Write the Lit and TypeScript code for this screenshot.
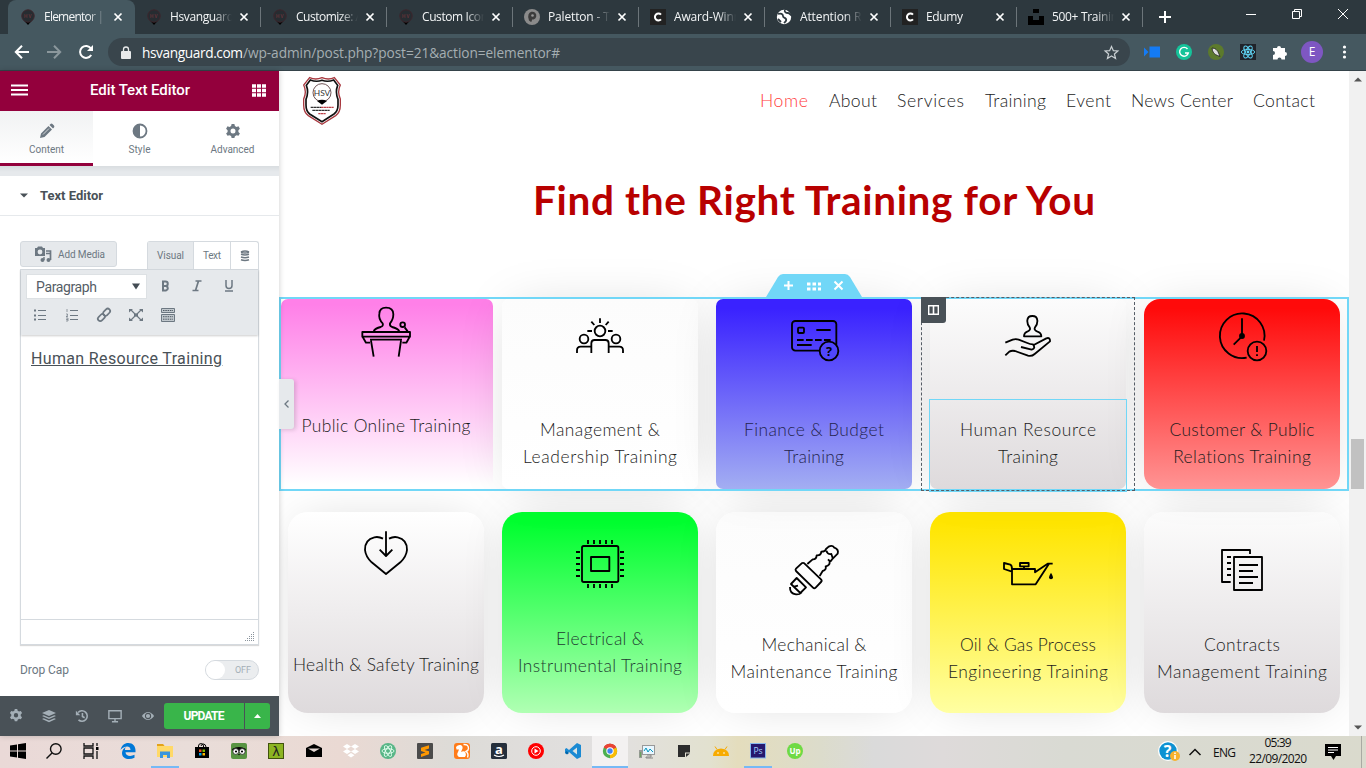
import { LitElement, html, css, svg, nothing } from 'lit';
import { customElement, property } from 'lit/decorators.js';

/** A single line of text whose tracking is adjusted to a given line width. */
@customElement('fit-text')
class FitText extends LitElement {
  @property({ type: Number }) w = 0;
  static styles = css`
    :host { display: inline-block; white-space: nowrap; }
    span { display: inline-block; }
  `;
  render() {
    return html`<span><slot></slot></span>`;
  }
  firstUpdated() {
    const n = (this.textContent || '').length;
    const natural = this.getBoundingClientRect().width;
    if (!this.w || n < 2) return;
    const ls = (this.w - natural) / (n - 1);
    this.style.letterSpacing = ls + 'px';
    this.style.marginRight = -ls + 'px';
  }
}

const pin = svg`<path d="M4 11.500h8L8 16z" fill="#000"/><circle cx="8" cy="7" r="6.200" fill="#262c31" stroke="#3d252c" stroke-width="1"/><path d="M4.800 5v4M7 5v4M4.800 7H7M9 5l1.200 4L11.400 5" stroke="#5e3238" fill="none" stroke-width=".8"/>`;
const cIcon = svg`<rect width="16" height="16" fill="#222"/><path d="M11 5.600A3.500 3.500 0 1 0 11 10.400" fill="none" stroke="#fff" stroke-width="2"/>`;

const tabs: [any, string, number][] = [
  [pin, 'Elementor |', 60],
  [pin, 'Hsvanguard', 64],
  [pin, 'Customize: A', 67],
  [pin, 'Custom Icon', 66],
  [svg`<circle cx="8" cy="8" r="8" fill="#8b8b8b"/><path d="M5 11.500Q3.500 8 4.500 5.500a4 4 0 1 1 5 5L8 10.500q0 2-1 2.500z" fill="#3c3c3c"/><circle cx="8.500" cy="6.500" r="1.300" fill="#999"/>`, 'Paletton - Th', 69],
  [cIcon, 'Award-Winn', 67],
  [svg`<circle cx="8" cy="8" r="7.200" fill="#fff"/><path d="M2 5c3-1 5 0 5 2s2 1 3 3-1 3-2 4M9 1c-1 2 1 3 3 3s2 2 3 2M2 10l3 3" stroke="#2d383e" stroke-width="1.800" fill="none"/>`, 'Attention Re', 68],
  [cIcon, 'Edumy', 37],
  [svg`<path d="M5 0h6v4H5zM0 7h5v4h6V7h5v9H0z" fill="#000"/>`, '500+ Trainin', 66],
];

interface Card {
  top: number; iconY: number; textY: number; tone: string; box: string; icon: any; lines: [string, number][];
}

const row1: Card[] = [
  { top: 299, iconY: 332, textY: 426, tone: 'pink', box: '228 126 180 180',
    icon: svg`<path d="M281 213q5-8 21-12q9-3 6-11q-13-13-10-29q1-18 20-18q22 0 22 20q0 16-10 27q-2 8 6 11q16 4 22 12M247 216h143v14H247zM247 229l11 19h12M390 229l-11 19h-12M270 239h96M273 242l8 48M363 242l-7 48M374 202l9 12"/><circle cx="368" cy="194" r="7"/>`,
    lines: [['Public Online Training', 169]] },
  { top: 299, iconY: 336, textY: 430, tone: 'snow', box: '870 138 180 180',
    icon: svg`<circle cx="960" cy="213" r="16"/><circle cx="912" cy="237" r="13"/><circle cx="1008" cy="237" r="13"/><path d="M934 279v-29q0-10 10-10h32q10 0 10 10v29M891 279v-8q0-11 11-11h30M1029 279v-8q0-11-11-11h-30M960 175v14M934 185l9 10M986 185l-9 10M922 213h14M984 213h14"/>`,
    lines: [['Management &', 120], ['Leadership Training', 154]] },
  { top: 299, iconY: 340, textY: 430, tone: 'blue', box: '252 150 180 180',
    icon: svg`<rect x="276" y="183" width="133" height="89" rx="10"/><rect x="294" y="203" width="18" height="16" rx="3"/><path d="M349 210h43M291 255h44"/><path d="M291 240h102" stroke-dasharray="20 7"/><circle cx="387" cy="273" r="28" fill="#5046fd"/><text x="387" y="287" class="q">?</text>`,
    lines: [['Finance & Budget', 140], ['Training', 60]] },
  { top: 299, iconY: 336, textY: 430, tone: 'fog', box: '894 138 180 180',
    icon: svg`<path d="M972 229h52q0-11-13-15q-10-4-6-12q8-9 7-21q-1-13-15-13t-15 13q-1 12 7 21q4 8-6 12q-11 4-11 15zM916 248l22-9q9-3 18 0l26 10q8 4 17 4q9 12-4 16l-32-8M1001 255l38-20q12-4 11 9l-46 38q-9 8-20 5l-39-14q-10-2-17 2l-12 11"/>`,
    lines: [['Human Resource', 136], ['Training', 60]] },
  { top: 299, iconY: 338, textY: 430, tone: 'red', box: '246 144 180 180',
    icon: svg`<path d="M402 242A67 67 0 1 0 350 293M336 175v50M333 232l-22 22M381 258v18M381 283v5"/><circle cx="336" cy="228" r="6" fill="#000"/><circle cx="381" cy="273" r="28"/>`,
    lines: [['Customer & Public', 145], ['Relations Training', 138]] },
];

const row2: Card[] = [
  { top: 512, iconY: 553, textY: 665, tone: 'mist', box: '228 99 180 180',
    icon: svg`<path d="M318 124v74M299 179l19 19l19-19M309 146Q296 139 283 142Q254 149 255 180Q257 200 275 217L318 252L361 217Q379 200 381 180Q382 149 353 142Q340 139 327 146"/>`,
    lines: [['Health & Safety Training', 186]] },
  { top: 512, iconY: 564, textY: 639, tone: 'green', box: '870 132 180 180',
    icon: svg`<rect x="906" y="168" width="109" height="108" rx="5"/><rect x="933" y="201" width="55" height="42"/><path d="M924 150v12M942 150v12M960 150v12M978 150v12M996 150v12M924 282v12M942 282v12M960 282v12M978 282v12M996 282v12M888 186h12M888 204h12M888 222h12M888 240h12M888 258h12M1020 186h12M1020 204h12M1020 222h12M1020 240h12M1020 258h12"/>`,
    lines: [['Electrical &', 88], ['Instrumental Training', 164]] },
  { top: 512, iconY: 570, textY: 645, tone: 'snow', box: '252 150 180 180',
    icon: svg`<path d="M288 236l17-16q4-3 8 0l50 48q4 4 0 8l-16 17q-4 4-8 0l-51-50q-3-4 0-7zM322 222l16-14q11 1 12-12q13 1 14-11q12 0 14-8l8-7q11-6 17 3q14 5 10 18l-17 17q-2 5-7 7q1 12-12 14q3 11-9 14l-9 15M379 182q4 12 15 10l4 12M384 208l8 8M290 264l-17 18l28 27l17-17zM270 291q-1 20 18 22q10 1 17-6M282 290l12-3"/>`,
    lines: [['Mechanical &', 105], ['Maintenance Training', 167]] },
  { top: 512, iconY: 573, textY: 645, tone: 'yellow', box: '894 159 180 180',
    icon: svg`<path d="M1058 221h-15l-38 26v-10h-69v46h71l40-62M960 219h26v10h-26zM972 229v8M936 245l-24-8v-18l19 5q5 2 5 14"/><path d="M1053 248q6 9 6 14a6 6 0 0 1-12 0q0-5 6-14z" fill="#000" stroke="none"/>`,
    lines: [['Oil & Gas Process', 136], ['Engineering Training', 160]] },
  { top: 512, iconY: 570, textY: 645, tone: 'fog', box: '306 150 180 180',
    icon: svg`<path d="M362 276h-26v-96h84v12M372 201h84v99h-84zM387 225h57M387 243h42M387 261h57M387 279h42M351 201h12M351 219h12M351 237h12M351 255h12"/>`,
    lines: [['Contracts', 76], ['Management Training', 170]] },
];

const nav: [string, number, number][] = [
  ['Home', 48, 21], ['About', 48, 20], ['Services', 67, 21], ['Training', 61, 20],
  ['Event', 45, 20], ['News Center', 102, 20], ['Contact', 62, 0],
];

const gear = svg`<path fill="currentColor" fill-rule="evenodd" d="M6.600 0h2.800l.5 2 1.600.9 2-.6 1.400 2.400-1.500 1.500v1.800l1.500 1.400-1.400 2.400-2-.6-1.600 1-.5 1.900H6.600l-.5-2-1.600-.9-2 .6-1.400-2.400L2.600 8V6.200L1.100 4.700l1.400-2.400 2 .6L6.100 2zM8 4.600a2.500 2.500 0 1 0 0 5 2.500 2.500 0 0 0 0-5z"/>`;

const apps: [any, string][] = [
  [svg`<path d="M0 2.500l7-1v6H0zM8 1.300L16 0v7.500H8zM0 8.500h7v6l-7-1zM8 8.500h8V16l-8-1.300z"/>`, 'start'],
  [svg`<circle cx="9.800" cy="6" r="5.300" fill="none" stroke="#111" stroke-width="1.400"/><path d="M6 10L.5 15.500" stroke="#111" stroke-width="1.500"/>`, ''],
  [svg`<path d="M1 0v3h9V0M1 16v-3h9v3M1 5h9v6H1zM14 0v3M14 8v8" fill="none" stroke="#111" stroke-width="1.300"/><path d="M13 4h2.500v3H13z"/>`, ''],
  [svg`<path d="M.5 7C1.500 2.500 4.500 0 8.300 0 13 0 15.500 3.500 15.500 7.500V9.300H5.500c.2 4 5.500 4.500 9 2.500v3C9 17.500 2 16 2 10c0-3 2-5 4-6-1 1.200-1 2-1 3h5.500C10.500 3 7 3 4.500 4 2.500 4.800 1 6 .5 7z" fill="#0078d7"/>`, ''],
  [svg`<path d="M0 1h6l1.500 2H16v11H0z" fill="#ffd968"/><path d="M0 1h6l1.500 2H0z" fill="#e3a21a"/><path d="M3 15V8.500h10V15h-3v-3H6v3z" fill="#3a96dd"/>`, 'open'],
  [svg`<path d="M1 4h14v11H1z"/><path d="M4.500 5V3q0-2.400 2.500-2.400T9.500 3v2M7 3q.5-2 2.500-2T12 4" fill="none" stroke="#000"/><path d="M5 6.500h2.500V9H5z" fill="#f25022"/><path d="M8.500 6.500H11V9H8.500z" fill="#7fba00"/><path d="M5 10h2.500v2.500H5z" fill="#00a4ef"/><path d="M8.500 10H11v2.500H8.500z" fill="#ffb900"/>`, ''],
  [svg`<rect width="16" height="16" rx="2" fill="#589442"/><path d="M1 6q7-4 14 0l-1 2H2z"/><circle cx="4.800" cy="8.500" r="2.900" fill="#fff" stroke="#111" stroke-width=".7"/><circle cx="11.200" cy="8.500" r="2.900" fill="#fff" stroke="#111" stroke-width=".7"/><circle cx="5" cy="8.500" r="1.100"/><circle cx="11" cy="8.500" r="1.100"/><path d="M7 11h2l-1 1.500z"/>`, ''],
  [svg`<rect x=".5" y=".5" width="15" height="15" fill="#8cb422" stroke="#40520e"/><text x="8" y="12.500" font-size="13" text-anchor="middle" font-family="DejaVu Sans" fill="#222">λ</text>`, ''],
  [svg`<path d="M0 5l8-4 8 4v9H0z"/><path d="M2 5.500h12L8 9z" fill="#e3d7d4"/>`, 'wide'],
  [svg`<path d="M4 1l4 2.500L4 6 0 3.500zM12 1l4 2.500L12 6 8 3.500zM4 6l4 2.500L4 11 0 8.500zM12 6l4 2.500-4 2.500-4-2.500zM8 10l3.500 2.300L8 14.600l-3.500-2.300z" fill="#fff"/>`, ''],
  [svg`<circle cx="8" cy="8" r="8" fill="#58b687"/><g fill="none" stroke="#e6fff0" stroke-width=".9"><ellipse cx="8" cy="8" rx="6" ry="2.300"/><ellipse cx="8" cy="8" rx="6" ry="2.300" transform="rotate(60 8 8)"/><ellipse cx="8" cy="8" rx="6" ry="2.300" transform="rotate(120 8 8)"/></g>`, ''],
  [svg`<rect width="16" height="16" rx="1" fill="#4b4b4b"/><path d="M4 4.800l8-2.500V5.500L7.500 7 12 8.300v3L4 14v-3l4.500-1.500L4 8z" fill="#ff9800"/>`, ''],
  [svg`<rect width="16" height="16" rx="3" fill="#ff7c1a"/><path d="M2 4q2-2.500 4.500-2 2.500.7 2 3.500L7 9q3-1.500 4.500.5 1 2-.5 4.500H5q-3-2-1-5l1-2.500H2.500z" fill="#fff"/><path d="M9.500 1.500q5-.5 5 4 0 2-2.500 3 3 2 1.500 6" fill="none" stroke="#fff" stroke-width="1.400"/>`, ''],
  [svg`<rect width="16" height="16" rx="1.500" fill="#252f3c"/><text x="8" y="11" font-size="13" font-weight="bold" text-anchor="middle" font-family="Open Sans" fill="#fff">a</text><path d="M3 12q5 3 10 0" stroke="#fff" fill="none" stroke-width="1.200"/>`, ''],
  [svg`<circle cx="8" cy="8" r="8" fill="#f00"/><circle cx="8" cy="8" r="4.300" fill="none" stroke="#fff"/><path d="M6.500 5.500L10.500 8l-4 2.500z" fill="#fff"/>`, ''],
  [svg`<path d="M12 0l4 2v12l-4 2L4 9 1.500 11 0 10V6l1.500-1L4 7z" fill="#1b8ad3"/><path d="M12 4.500V11.500L7.500 8z" fill="#dbe4e5"/><path d="M1.500 8L4 10 2 11.500.2 10z" fill="#0065a9"/>`, ''],
  [svg`<circle cx="8" cy="8" r="7.200" fill="#4caf50"/><path d="M8 8L1.800 4.400A7.200 7.200 0 0 1 14.200 4.400z" fill="#ea4335"/><path d="M8 8l6.200-3.600A7.200 7.200 0 0 1 8 15.200z" fill="#fbbc05"/><path d="M1.800 4.400A7.200 7.200 0 0 1 14.200 4.400H8z" fill="#ea4335"/><circle cx="8" cy="8" r="3.700" fill="#fff"/><circle cx="8" cy="8" r="2.700" fill="#4285f4"/>`, 'current'],
  [svg`<rect x="3.500" y="2.500" width="12" height="9" fill="#e8f7ff" stroke="#999"/><path d="M5 8l2-3 2 4 2-3 3 3" fill="none" stroke="#0795bd"/><path d="M8 12h4v2H7v1h7" stroke="#888" fill="none"/><path d="M0 7h3v8H0z" fill="#999"/><path d="M.8 9h1.400v5H.8z" fill="#6ca35f"/>`, ''],
  [svg`<path d="M2 2h12v7.500H9V14H2z" fill="#2c2c2c"/><path d="M10 10.500h4L10 14z" fill="#2c2c2c"/>`, ''],
  [svg`<path d="M0 13q0-7 8-7.500Q16 6 16 13z" fill="#f7ab00"/><path d="M4 6.500L2 3.500M12 6.500l2-3" stroke="#f7ab00"/><circle cx="5" cy="10" r=".8" fill="#fff"/><circle cx="11" cy="10" r=".8" fill="#fff"/>`, ''],
  [svg`<rect x=".5" y=".5" width="15" height="14.500" fill="#26186e" stroke="#87b8ef"/><text x="8" y="11" font-size="8.500" text-anchor="middle" font-family="Open Sans" fill="#a4d0ff">Ps</text>`, 'open'],
  [svg`<circle cx="8" cy="8" r="8" fill="#6fda44"/><text x="8" y="10.500" font-size="8" font-weight="bold" text-anchor="middle" font-family="Open Sans" fill="#fff">Up</text>`, ''],
];

@customElement('app-root')
class AppRoot extends LitElement {
  static styles = css`
    :host { display: flex; flex-direction: column; width: 1366px; height: 768px; overflow: hidden;
      font-family: 'Open Sans', 'Noto Sans', sans-serif; background: #fff; }
    * { box-sizing: border-box; }
    svg { display: block; flex: none; overflow: visible; }

    .strip { height: 34px; flex: none; display: flex; background: #2d383e; padding-left: 8px; }
    .tab { width: 126px; height: 34px; display: flex; align-items: center; padding-left: 12px; position: relative; color: #f3f5f6; font-size: 12px; }
    .tab.on { background: #455860; border-radius: 8px 8px 0 0; width: 127px; margin-right: -1px; }
    .tab.sep::before { content: ''; position: absolute; left: 0; top: 7px; width: 1px; height: 20px; background: #6c757a; }
    .tab .t { width: 70px; flex: none; margin-left: 8px; line-height: 20px; -webkit-mask-image: linear-gradient(90deg, #000 44px, transparent 62px); }
    .plus { margin: 11px 0 0 16px; }
    .endsep { width: 1px; height: 20px; margin-top: 7px; background: #6c757a; }
    .win { display: flex; margin-left: auto; padding: 8px 17px 0 0; gap: 34px; }

    .bar { height: 37px; flex: none; background: #455860; border-bottom: 1px solid #35434a; display: flex; align-items: center; padding-left: 14px; }
    .bar .nv { margin-right: 16px; }
    .omni { width: 1022px; height: 28px; margin-left: -2px; border-radius: 14px; background: #39454c; display: flex; align-items: center; padding: 0 11px 0 13px; color: #a5aeb2; font-size: 13.700px; }
    .omni b { font-weight: 400; color: #fff; }
    .omni .lk { margin-right: 11px; }
    .omni .st { margin-left: auto; }
    .ext { display: flex; align-items: center; gap: 16px; margin-left: 14px; }
    .ava { width: 22px; height: 22px; margin: 0 -3px; border-radius: 50%; background: #7e57c2; color: #fff; font-size: 12px; line-height: 22px; text-align: center; }

    .main { display: flex; height: 665px; flex: none; }
    .panel { width: 279px; flex: none; background: #fff; display: flex; flex-direction: column; font-family: Roboto, sans-serif; color: #6d7882; position: relative; z-index: 3; box-shadow: 0 0 6px rgba(0,0,0,.2); }
    .phead { height: 40px; flex: none; background: #93003c; display: flex; align-items: center; justify-content: space-between; padding: 0 13px 2px 11px; color: #fff; font-size: 15px; font-weight: 500; }
    .ptabs { height: 55px; flex: none; display: flex; font-size: 10px; position: relative; }
    .ptab { width: 93px; display: flex; flex-direction: column; align-items: center; padding-top: 12px; gap: 4px; line-height: 14px; border-bottom: 3px solid transparent; }
    .ptab.on { background: linear-gradient(#f1f2f3, #fff); border-bottom-color: #93003c; }
    .gap { height: 10px; flex: none; background: linear-gradient(#d9dde0, #e6e9ec 6px); }
    .shead { height: 40px; flex: none; border-bottom: 1px solid #e6e9ec; display: flex; align-items: center; padding-left: 20px; gap: 12px; color: #495157; font-size: 13px; font-weight: 700; }
    .ed { padding: 25px 20px 0; }
    .edtop { display: flex; height: 28px; font-size: 10px; }
    .add { width: 97px; height: 26px; border: 1px solid #d5dadf; border-radius: 3px; background: #e6e9ec; display: flex; align-items: center; padding-left: 13px; gap: 6px; }
    .sw { margin-left: auto; display: flex; border: 1px solid #d5dadf; border-bottom: 0; border-radius: 3px 3px 0 0; line-height: 26px; text-align: center; }
    .sw div { display: flex; align-items: center; justify-content: center; border-left: 1px solid #d5dadf; height: 27px; }
    .sw .v { width: 45px; background: #e6e9ec; border: 0; }
    .sw .tx { width: 37px; }
    .sw .db { width: 28px; }
    .mce { border: 1px solid #d5dadf; height: 376px; display: flex; flex-direction: column; box-shadow: 0 1px 1px rgba(0,0,0,.15); }
    .tools { height: 65px; background: #e6e9ec; padding: 4px 5px 0; box-shadow: 0 1px 2px rgba(0,0,0,.2); display: flex; flex-direction: column; gap: 4px; }
    .tr { display: flex; height: 25px; align-items: center; }
    .sel { width: 121px; height: 25px; background: #fff; border: 1px solid #dde1e4; display: flex; align-items: center; justify-content: space-between; padding: 0 6px 0 9px; font-size: 14px; color: #555d66; margin-right: 9px; }
    .tr .ic { width: 18px; margin-right: 14px; display: flex; justify-content: center; }
    .tr .ic svg { margin-top: -1px; }
    .tr.b { padding-left: 5px; }
    .doc { flex: 1; padding: 14px 10px; font-size: 16px; line-height: 20px; color: #495157; }
    .stat { height: 25px; border-top: 1px solid #d5dadf; display: flex; justify-content: flex-end; align-items: flex-end; padding: 3px; }
    .drop { display: flex; justify-content: space-between; align-items: center; padding-top: 15px; font-size: 12px; height: 35px; }
    .tog { width: 54px; height: 20px; border-radius: 10px; background: #ebedef; border: 1px solid #d5dadf; display: flex; align-items: center; font-size: 9px; gap: 10px; color: #a4afb7; }
    .tog i { width: 19px; height: 18px; border-radius: 9px; background: #fff; }
    .pfoot { height: 40px; margin-top: auto; background: #495157; display: flex; align-items: center; color: #a4afb7; padding-left: 9px; }
    .pfoot svg { margin-right: 19px; }
    .upd { width: 80px; height: 26px; background: #39b54a; border-radius: 3px 0 0 3px; color: #fff; font-size: 12px; font-weight: 700; text-align: center; line-height: 26px; margin-left: -10px; }
    .up2 { width: 25px; height: 26px; margin-left: 1px; background: #39b54a; border-radius: 0 3px 3px 0; display: flex; align-items: center; justify-content: center; }
    .pfoot .up2 svg { margin: 0; }
    .fold { position: absolute; left: 279px; top: 308px; width: 15px; height: 50px; background: #e6e9ec; box-shadow: 2px 1px 4px rgba(0,0,0,.15); border-radius: 0 3px 3px 0; display: flex; align-items: center; justify-content: center; }

    .site { width: 1070px; flex: none; overflow: hidden; font-family: Lato, sans-serif; font-weight: 300; position: relative; }
    .shd { height: 60px; display: flex; align-items: center; padding: 0 34px 0 24px; font-size: 17.600px; color: #222; }
    .menu { margin: -2px 0 0 auto; display: flex; }
    .home { color: #ff3d3d; }
    .title { height: 166px; margin: 0; padding: 44px 0 0; text-align: center; font-size: 40.500px; font-weight: 700; line-height: 50px; color: #b80000; }
    .cards { display: grid; grid-template-columns: repeat(5, 214px); }
    .sec { position: relative; height: 194px; padding-top: 2px; }
    .sec .card { height: 190px; border-radius: 7px; }
    .sec .card.pink { margin: 0 0 0 2px; padding-right: 2px; box-shadow: none; }
    .sec .card.red { border-radius: 16px; }
    .second { margin-top: 21px; }
    .card { height: 201px; margin: 0 9px; border-radius: 20px; display: flex; flex-direction: column; align-items: center; box-shadow: 0 0 50px -12px rgba(0,0,0,.17); color: #1c1c1c; }
    .card svg { width: 60px; height: 60px; fill: none; stroke: #000; stroke-width: 5.500; stroke-linejoin: round; }
    .q { font: 700 38px 'Open Sans'; fill: #000; stroke: none; text-anchor: middle; }
    .lab { font-size: 17.400px; line-height: 27px; display: flex; flex-direction: column; align-items: center; white-space: nowrap; }
    .pink { background: linear-gradient(#ff80e8 3%, #fff 98%); }
    .snow { background: linear-gradient(#fcfcfc, #fff); }
    .blue { background: linear-gradient(#3a22ff 5%, #a3aef2); color: #24244f; }
    .fog { background: linear-gradient(#fcfcfc, #dedadc); }
    .mist { background: linear-gradient(#fff, #dedadc); }
    .red { background: linear-gradient(#ff0a0a 5%, #ff9494); }
    .green { background: linear-gradient(#00ff2f 5%, #b0ffb3); color: #213b31; }
    .yellow { background: linear-gradient(#ffe500 5%, #ffffa2); }
    .outline { position: absolute; inset: 0; border: 2px solid #71d7f7; }
    .handle { position: absolute; left: 486px; top: -23px; }
    .col { position: absolute; left: 642px; top: 0; width: 214px; height: 194px; border: 1px dashed #555d66; }
    .coltag { position: absolute; left: 642px; top: 0; width: 25px; height: 26px; background: #495157; border-radius: 0 0 3px 0; display: flex; align-items: center; justify-content: center; }
    .widget { position: absolute; left: 650px; top: 102px; width: 198px; height: 93px; border: 1px solid #71d7f7; }

    .scroll { width: 17px; background: #f1f1f1; display: flex; flex-direction: column; align-items: center; padding: 6px 0; }
    .thumb { width: 13px; height: 50px; background: #c1c1c1; margin-top: 357px; }
    .scroll .dn { margin-top: auto; }

    .task { height: 32px; flex: none; display: flex; background: linear-gradient(90deg, #ead9d7 0, #e9ddd9 14%, #ead9d3 25%, #dddbd7 33%, #e2e0e0 45%, #e2e1cf 52%, #e4ddbd 54%, #dcdccb 60%, #dadada 64%, #dedada 69%, #d9dad3 78%, #dadacd 100%); }
    .app { width: 36px; height: 30px; margin-right: 1px; display: flex; align-items: center; justify-content: center; box-sizing: content-box; border-bottom: 2px solid transparent; }
    .app.start { width: 35px; }
    .app.wide { margin-left: 1px; }
    .app.open { width: 28px; margin: 0 5px 0 4px; border-bottom-color: #76b9f5; }
    .app.current { background: #f3f1f1; background-clip: padding-box; border-bottom-color: #76b9f5; }
    .tray { margin-left: auto; display: flex; align-items: center; color: #111; font-size: 12px; }
    .caret { margin: 0 12px 0 9px; }
    .clock { width: 60px; margin: -2px 17px 0 12px; display: flex; flex-direction: column; align-items: center; line-height: 16px; }
    .edge { width: 5px; height: 32px; border-left: 1px solid #a9aaa3; margin-left: 20px; }
  `;

  card(c: Card) {
    const first = c.iconY - 30 - c.top;
    const gap = c.textY - 14 - (c.iconY + 30);
    return html`<div class="card ${c.tone}">
      <svg viewBox=${c.box} style="margin-top:${first}px;margin-bottom:${gap}px">${c.icon}</svg>
      <div class="lab">${c.lines.map(([t, w]) => html`<fit-text .w=${w}>${t}</fit-text>`)}</div>
    </div>`;
  }

  render() {
    const ic = (size: number, body: any, cls = '', box = 16) =>
      html`<svg class=${cls} width=${size} height=${size} viewBox="0 0 ${box} ${box}">${body}</svg>`;
    return html`
      <div class="strip">
        ${tabs.map(([icon, t, w], i) => html`<div class="tab ${i === 0 ? 'on' : i > 1 ? 'sep' : ''}">
          ${ic(16, icon)}<div class="t"><fit-text .w=${w}>${t}</fit-text></div>
          <svg width="8" height="8" viewBox="0 0 8 8"><path d="M.5.5l7 7M7.500.5l-7 7" stroke="#fff" stroke-width="1.700"/></svg>
        </div>`)}
        <div class="endsep"></div>
        <svg class="plus" width="12" height="12" viewBox="0 0 12 12"><path d="M6 0v12M0 6h12" stroke="#fff" stroke-width="2"/></svg>
        <div class="win">
          <svg width="12" height="12"><path d="M1 6.500h10" stroke="#fff"/></svg>
          <svg width="12" height="12"><path d="M1.500 3.500h7v7h-7zM3.500 3v-1.500h7v7H9" fill="none" stroke="#fff"/></svg>
          <svg width="12" height="12"><path d="M1 1l10 10M11 1L1 11" stroke="#fff"/></svg>
        </div>
      </div>

      <div class="bar">
        ${ic(16, svg`<path d="M15 8H2M8 1.800L1.800 8 8 14.200" fill="none" stroke="#fff" stroke-width="2"/>`, 'nv')}
        ${ic(16, svg`<path d="M1 8h13M8 1.800L14.200 8 8 14.200" fill="none" stroke="#8b979c" stroke-width="2"/>`, 'nv')}
        ${ic(16, svg`<path d="M13.200 11A6 6 0 1 1 13 4.500" fill="none" stroke="#fff" stroke-width="2"/><path d="M15 1v6H9z" fill="#fff"/>`, 'nv')}
        <div class="omni">
          <svg class="lk" width="10" height="13" viewBox="0 0 10 13"><path d="M1 5h8q1 0 1 1v6q0 1-1 1H1q-1 0-1-1V6q0-1 1-1z" fill="#e8eaeb"/><path d="M2.500 5V3.500a2.500 2.500 0 0 1 5 0V5" fill="none" stroke="#e8eaeb" stroke-width="1.300"/></svg>
          <b><fit-text .w=${101}>hsvanguard.com</fit-text></b><fit-text .w=${317}>/wp-admin/post.php?post=21&amp;action=elementor#</fit-text>
          ${ic(15, svg`<path d="M8 1.500l2 4.500 4.800.4-3.700 3.200 1.200 4.800L8 11.800l-4.300 2.600 1.200-4.800L1.200 6.400 6 6z" fill="none" stroke="#c9cfd2" stroke-width="1.300"/>`, 'st')}
        </div>
        <div class="ext">
          ${ic(16, svg`<path d="M5.500 2.500H16v11H5.500zM0 3.500L4.500 8 0 12.500z" fill="#147bf5"/>`)}
          ${ic(16, svg`<circle cx="8" cy="8" r="8" fill="#15c39a"/><path d="M11.500 5A4.400 4.400 0 1 0 12.300 9H9" fill="none" stroke="#fff" stroke-width="1.400"/>`)}
          ${ic(16, svg`<circle cx="8" cy="8" r="8" fill="#5c7a2c"/><path d="M4 4q5 0 7 6l1 2.500-2.500-1Q4.500 10 4 4z" fill="#dedede" stroke="#222" stroke-width=".8"/>`)}
          ${ic(16, svg`<rect width="16" height="16" fill="#20232a"/><circle cx="8" cy="8" r="1.400" fill="#61dafb"/><g fill="none" stroke="#61dafb" stroke-width=".9"><ellipse cx="8" cy="8" rx="6.700" ry="2.600"/><ellipse cx="8" cy="8" rx="6.700" ry="2.600" transform="rotate(60 8 8)"/><ellipse cx="8" cy="8" rx="6.700" ry="2.600" transform="rotate(120 8 8)"/></g>`)}
          ${ic(16, svg`<path d="M1 4h4a2 2 0 1 1 4 0h4v4a2 2 0 1 1 0 4v3.500H9.500a2 2 0 0 0-4 0H1V11a2 2 0 0 0 0-4z" fill="#fff"/>`)}
          <div class="ava">E</div>
          ${ic(16, svg`<circle cx="8.500" cy="3" r="1.600" fill="#fff"/><circle cx="8.500" cy="8" r="1.600" fill="#fff"/><circle cx="8.500" cy="13" r="1.600" fill="#fff"/>`)}
        </div>
      </div>

      <div class="main">
        <div class="panel">
          <div class="phead">
            <svg width="17" height="12"><path d="M0 1.500h17M0 6h17M0 10.500h17" stroke="#fff" stroke-width="2.200"/></svg>
            <fit-text .w=${100}>Edit Text Editor</fit-text>
            <svg width="14" height="13"><path d="M0 2h14M0 6.500h14M0 11h14" stroke="#fff" stroke-width="3.400" stroke-dasharray="4 1"/></svg>
          </div>
          <div class="ptabs">
            <div class="ptab on">${ic(16, svg`<path d="M1 15l1-4.500L9.500 3l3.500 3.500L5.500 14zM10.500 2l1-1q1-.8 2 0L15 2.500q.8 1 0 2l-1 1z" fill="currentColor"/><path d="M4 11.500L10 5.500" stroke="#fff" stroke-width=".7"/>`)}<fit-text .w=${35}>Content</fit-text></div>
            <div class="ptab">${ic(16, svg`<circle cx="8" cy="8" r="6.500" fill="none" stroke="currentColor" stroke-width="1.800"/><path d="M8 1.500a6.500 6.500 0 0 0 0 13z" fill="currentColor"/>`)}<fit-text .w=${22}>Style</fit-text></div>
            <div class="ptab">${ic(16, svg`<g transform="translate(0 1)">${gear}</g>`)}<fit-text .w=${44}>Advanced</fit-text></div>
          </div>
          <div class="gap"></div>
          <div class="shead"><svg width="8" height="5"><path d="M0 .5h8L4 4.500z" fill="#495157"/></svg><fit-text .w=${63}>Text Editor</fit-text></div>
          <div class="ed">
            <div class="edtop">
              <div class="add"><svg width="18" height="17" viewBox="0 0 18 17"><path d="M1 2h2l1-1.500h4L9 2h2v8H1z" fill="#6d7882"/><circle cx="6" cy="6" r="2.400" fill="#e6e9ec"/><path d="M12 5h4.500v9M12 7.500h4" fill="none" stroke="#6d7882" stroke-width="1.700"/><circle cx="14.500" cy="14" r="2" fill="#6d7882"/><circle cx="8.500" cy="14" r="2" fill="#6d7882"/><path d="M10 14v-3" stroke="#6d7882" stroke-width="1.400"/></svg><fit-text .w=${47}>Add Media</fit-text></div>
              <div class="sw"><div class="v"><fit-text .w=${27}>Visual</fit-text></div><div class="tx"><fit-text .w=${18}>Text</fit-text></div><div class="db"><svg width="10" height="11"><path d="M1 2q4-2 8 0M1 4.200q4 1.500 8 0M1 7q4 1.500 8 0M1 9.800q4 1.500 8 0M1 2.200q4 1.500 8 0" fill="none" stroke="#6d7882" stroke-width="1.500"/></svg></div></div>
            </div>
            <div class="mce">
              <div class="tools">
                <div class="tr"><div class="sel"><fit-text .w=${61}>Paragraph</fit-text><svg width="8" height="7"><path d="M0 .5h8L4 6.500z" fill="#444c54"/></svg></div>
                  <div class="ic"><svg width="10" height="12"><path d="M2 1.500h3.500a2.200 2.200 0 0 1 0 4.500H3h3a2.300 2.300 0 0 1 0 4.500H2M3 1v10" fill="none" stroke="#6d7882" stroke-width="2"/></svg></div>
                  <div class="ic"><svg width="10" height="12"><path d="M3.500 1h6M.5 10.500h6M6.500 1L3.500 10.500" fill="none" stroke="#6d7882" stroke-width="1.700"/></svg></div>
                  <div class="ic"><svg width="10" height="12"><path d="M2 0v5.500a3 3 0 0 0 6 0V0M1 11h8" fill="none" stroke="#6d7882" stroke-width="1.500"/></svg></div>
                </div>
                <div class="tr b">
                  <div class="ic"><svg width="12" height="12"><path d="M4 1.500h8M4 6.500h8M4 10.500h8" stroke="#6d7882"/><path d="M0 1.500h2M0 6.500h2M0 10.500h2" stroke="#6d7882" stroke-width="2"/></svg></div>
                  <div class="ic"><svg width="12" height="12"><path d="M4 1.500h8M4 6.500h8M4 10.500h8" stroke="#6d7882"/><path d="M1 0v3M0 5h1.500v1.500L0 7.500h2M0 9h2v3H0M0 10.500h2" fill="none" stroke="#6d7882" stroke-width=".7"/></svg></div>
                  <div class="ic"><svg width="14" height="14" viewBox="0 0 14 14" fill="none" stroke="#6d7882" stroke-width="1.700"><rect x="5.600" y="1.800" width="8" height="4.800" rx="2.400" transform="rotate(-45 9.600 4.200)"/><rect x=".4" y="7.200" width="8" height="4.800" rx="2.400" transform="rotate(-45 4.400 9.600)"/></svg></div>
                  <div class="ic"><svg width="14" height="12" viewBox="0 0 14 12"><path d="M2 1l10 10M12 1L2 11" stroke="#6d7882" stroke-width="1.200"/><path d="M5 4.500h4v3H5zM0 0h4L0 3.500zM14 0h-4l4 3.500zM0 12h4L0 8.500zM14 12h-4l4-3.500z" fill="#6d7882"/></svg></div>
                  <div class="ic"><svg width="14" height="14" viewBox="0 0 14 14"><path d="M.5.5h13v4H.5zM.5 6.500h13v7H.5z" fill="#c2c9ce" stroke="#6d7882"/><path d="M2 2.500h10M2 8.700h10M2 11.200h10" stroke="#4f5963" stroke-dasharray="1.500 .8"/></svg></div>
                </div>
              </div>
              <div class="doc"><fit-text .w=${191}><u>Human Resource Training</u></fit-text></div>
              <div class="stat"><svg width="10" height="10" fill="none" stroke="#8a949d"><path d="M0 9.500h10M2 7.500h8M4 5.500h6M6 3.500h4M8 1.500h2" stroke-dasharray="1 1"/></svg></div>
            </div>
            <div class="drop"><fit-text .w=${49}>Drop Cap</fit-text><div class="tog"><i></i><fit-text .w=${16}>OFF</fit-text></div></div>
          </div>
          <div class="pfoot">
            ${ic(14, gear)}
            ${ic(14, svg`<path d="M8 1l8 3.500L8 8 0 4.500zM2 7l6 2.700L14 7l2 1-8 3.500L0 8zM2 10.500l6 2.700 6-2.700 2 1L8 15 0 11.500z" fill="currentColor"/>`)}
            ${ic(14, svg`<path d="M3.500 4A6 6 0 1 1 4 12.500M8.500 4.500v4l2.500 1.500" fill="none" stroke="currentColor" stroke-width="1.800"/><path d="M1 2v5h5z" fill="currentColor"/>`)}
            ${ic(14, svg`<path d="M1 2h14v9H1zM8 11v3M4.500 14.500h7" fill="none" stroke="currentColor" stroke-width="1.600"/>`)}
            ${ic(14, svg`<path d="M1 8q7-9 14 0-7 9-14 0z" fill="currentColor"/><circle cx="8" cy="8" r="3" fill="none" stroke="#495157" stroke-width="1.200"/>`)}
            <div class="upd"><fit-text .w=${41}>UPDATE</fit-text></div>
            <div class="up2"><svg width="7" height="4"><path d="M0 4h7L3.500 0z" fill="#fff"/></svg></div>
          </div>
          <div class="fold"><svg width="5" height="8"><path d="M4.500.5L1 4l3.500 3.500" fill="none" stroke="#6d7882" stroke-width="1.300"/></svg></div>
        </div>

        <div class="site">
          <div class="shd">
            <svg width="38" height="48" viewBox="0 0 114 144" fill="none"><path d="M20 2q18 8 37 0q19 8 37 0l18 22q-10 20 0 42v18q0 22-14 32L57 142 16 116Q2 106 2 84V66q10-22 0-42z" stroke="#a8383f" stroke-width="4"/><path d="M22 9q18 7 35 1q17 6 35-1l12 16q-8 20 1 42v17q0 18-12 27L57 134 20 111Q9 102 9 84V67q9-22 1-42z" stroke="#111" stroke-width="5"/><circle cx="57" cy="47" r="27" stroke="#523033" stroke-width="2.500"/><text x="57" y="56" text-anchor="middle" font-size="25" font-weight="400" font-family="Lato" fill="#333">HSV</text><path d="M42 72q15-8 30 0L57 83z" fill="#000"/><path d="M23 91h31M28 100h52" stroke="#333" stroke-width="4" stroke-dasharray="8 1"/><path d="M54 91h38M46 110h22" stroke="#bd4148" stroke-width="3.500" stroke-dasharray="7 1"/></svg>
            <div class="menu">${nav.map(([t, w, g], i) => html`<fit-text class=${i === 0 ? 'home' : ''} .w=${w}>${t}</fit-text>${g ? html`<svg width=${g} height="1"></svg>` : nothing}`)}</div>
          </div>
          <h1 class="title"><fit-text .w=${562}>Find the Right Training for You</fit-text></h1>
          <div class="cards sec">
            ${row1.map((c) => this.card(c))}
            <div class="outline"></div>
            <div class="handle"><svg width="98" height="23" viewBox="0 0 98 23"><path d="M1 23L13 3q2-3 5-3h62q3 0 5 3l12 20z" fill="#71d7f7"/><path d="M19 11.500h9M23.500 7v9M69.500 7.500l8 8M77.500 7.500l-8 8" stroke="#fff" stroke-width="2"/><path d="M42 10h14M42 15h14" stroke="#fff" stroke-width="3" stroke-dasharray="3.500 2"/></svg></div>
            <div class="col"></div>
            <div class="widget"></div>
            <div class="coltag"><svg width="11" height="10"><path d="M.7.7h9.600v8.600H.7z" fill="none" stroke="#fff" stroke-width="1.400"/><path d="M5.500 1v8" stroke="#fff" stroke-width="1.600"/></svg></div>
          </div>
          <div class="cards second">${row2.map((c) => this.card(c))}</div>
        </div>
        <div class="scroll">
          <svg width="8" height="5"><path d="M0 4.500h8L4 .5z" fill="#555"/></svg>
          <div class="thumb"></div>
          <svg class="dn" width="8" height="5"><path d="M0 .5h8L4 4.500z" fill="#555"/></svg>
        </div>
      </div>

      <div class="task">
        ${apps.map(([icon, cls]) => html`<div class="app ${cls}">${ic(16, icon)}</div>`)}
        <div class="tray">
          <svg width="22" height="22" viewBox="0 0 22 22"><circle cx="10" cy="10" r="10" fill="#fff"/><circle cx="10" cy="10" r="8.700" fill="#0d92d2"/><text x="9.500" y="16" font-size="16" font-weight="bold" text-anchor="middle" font-family="Open Sans" fill="#fff">?</text><circle cx="17" cy="15" r="5" fill="#f6b12d"/><path d="M17 11.500v1.500M17 14v4" stroke="#fff" stroke-width="1.500"/></svg>
          <svg class="caret" width="12" height="8"><path d="M.5 7L6 1.500 11.500 7" fill="none" stroke="#111" stroke-width="1.500"/></svg>
          <fit-text .w=${23}>ENG</fit-text>
          <div class="clock"><fit-text .w=${27}>05:39</fit-text><fit-text .w=${58}>22/09/2020</fit-text></div>
          <svg width="16" height="16"><path d="M0 0h16v12h-5l-2.500 4L6 12H0z"/><path d="M3 3.500h10M3 6h10M3 8.500h6" stroke="#fff"/></svg>
          <div class="edge"></div>
        </div>
      </div>
    `;
  }
}
